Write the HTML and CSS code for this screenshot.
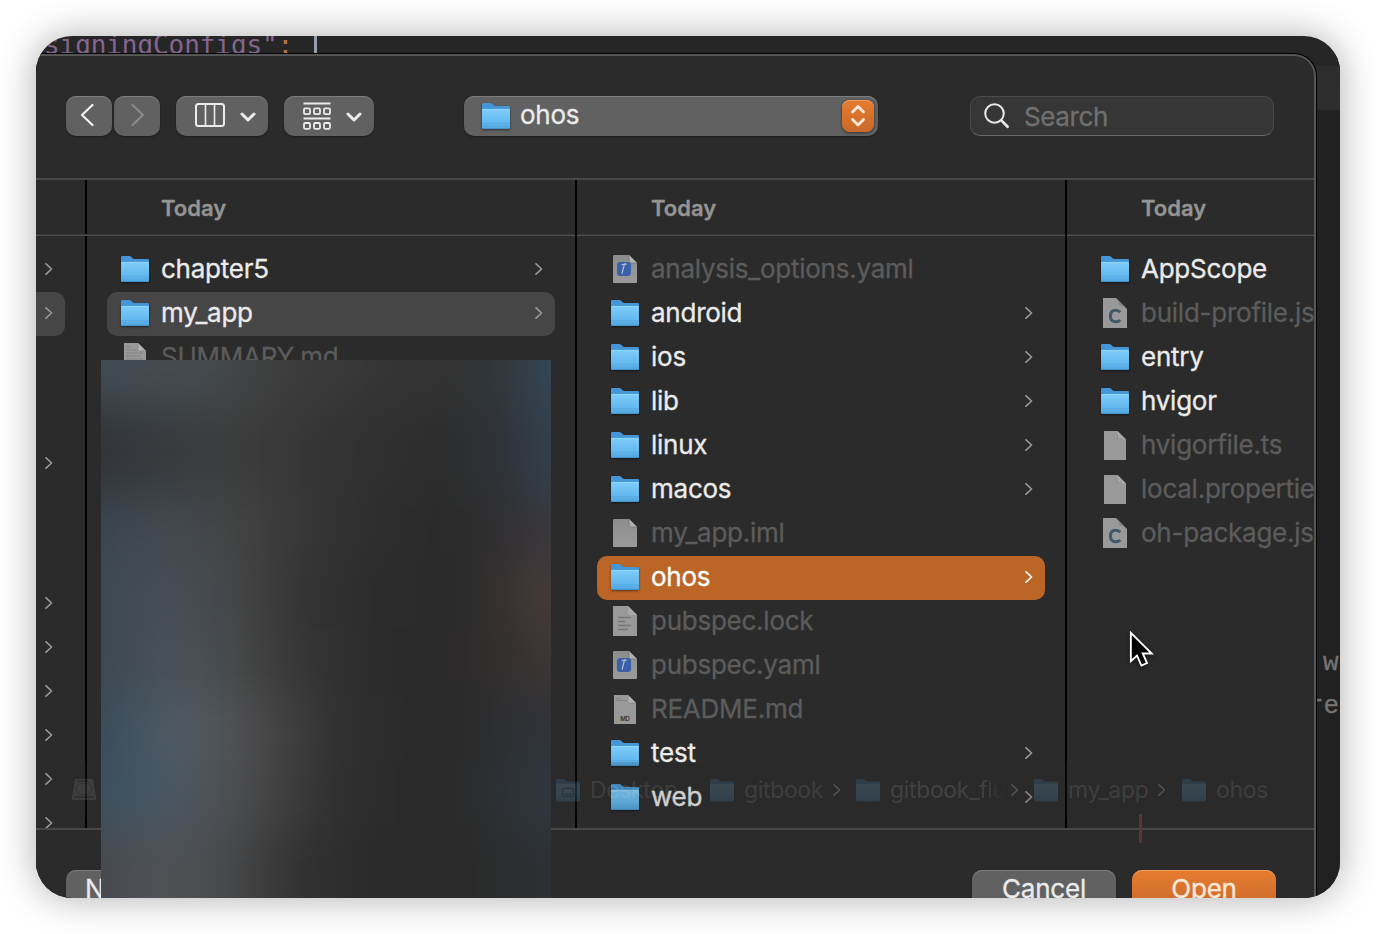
FILE: index.html
```html
<!DOCTYPE html>
<html lang="en">

<head>
    <meta charset="UTF-8">
    <meta name="viewport" content="width=device-width, initial-scale=1.0">
    <title>Open</title>
    <link rel="stylesheet" href="styles.css">
</head>

<body>
    <!-- icons -->
    <svg class="sprite" width="0" height="0">
        <defs>
            <linearGradient id="folderFront" x1="0" y1="0" x2="0" y2="1">
                <stop offset="0" stop-color="#7fcdfa" />
                <stop offset="0.75" stop-color="#60b6ee" />
                <stop offset="1" stop-color="#4ea3dc" />
            </linearGradient>
            <linearGradient id="paper" x1="0" y1="0" x2="0" y2="1">
                <stop offset="0" stop-color="#8d8d8d" />
                <stop offset="1" stop-color="#9b9b9b" />
            </linearGradient>
        </defs>
        <symbol id="folder" viewBox="0 0 28 27">
            <path d="M0 1.2Q0 0 1.2 0H8.4Q9.4 0 10.2 .8L11.6 2.2Q12.4 3 13.4 3H26.8Q28 3 28 4.2V24H0Z" fill="#4496d6" />
            <path d="M0 7Q0 6 1 6H27Q28 6 28 7V24.8Q28 26 26.8 26H1.2Q0 26 0 24.8Z" fill="url(#folderFront)" />
            <path d="M.5 6.4H27.5" stroke="#93d8fc" stroke-width=".8" />
            <path d="M0 20.5H28M0 22.5H28" stroke="#55a9e0" stroke-width=".8" />
            <path d="M.8 25.6H27.2" stroke="#3d8cc6" stroke-width=".8" />
        </symbol>
        <symbol id="file" viewBox="0 0 28 30">
            <path d="M2 2.2Q2 1 3.2 1H18L26 9V27.8Q26 29 24.8 29H3.2Q2 29 2 27.8Z" fill="url(#paper)" />
            <path d="M18 1L26 9H19Q18 9 18 8Z" fill="#b0b0b0" />
            <path d="M18 1V8Q18 9 19 9H26" fill="none" stroke="#777" stroke-width=".8" />
        </symbol>
        <symbol id="plain" viewBox="0 0 28 30">
            <path d="M3 1H16.5L25 9.5V30H3Z" fill="#999" />
            <path d="M16.5 1L25 9.5H18Q16.5 9.5 16.5 8Z" fill="#a8a8a8" />
            <path d="M16.5 5V9H21" fill="none" stroke="#858585" stroke-width=".8" />
        </symbol>
        <symbol id="yaml" viewBox="0 0 28 30">
            <use href="#file" />
            <rect x="6" y="8" width="14" height="14" rx="3" fill="#3961a8" />
            <path d="M10.6 11L14.6 9.8L15.4 11M13.4 10.4L11 19.6" fill="none" stroke="#b7c1d3" stroke-width="1.2" />
        </symbol>
        <symbol id="text" viewBox="0 0 28 30">
            <path d="M2 0H17L26 9V30H2Z" fill="#999" />
            <path d="M17 0L26 9H19Q17 9 17 7Z" fill="#aaa" />
            <path d="M7 11.5H20M7 15.5H14M7 19.5H20M7 23.5H17" stroke="#787878" stroke-width="1.5" />
        </symbol>
        <symbol id="md" viewBox="0 0 28 30">
            <path d="M3 1H17L25 9V30H3Z" fill="#999" />
            <path d="M17 1L25 9H18Q17 9 17 8Z" fill="#b4b4b4" stroke="#808080" stroke-width=".6" />
            <path d="M5 4.5H10M5 6.5H16" stroke="#858585" stroke-width="1" />
            <text class="md-label" x="14" y="26.8" text-anchor="middle">MD</text>
        </symbol>
        <symbol id="summary" viewBox="0 0 28 30">
            <path d="M3 1H17L25 9V30H3Z" fill="#999" />
            <path d="M17 1L25 9H18Q17 9 17 8Z" fill="#b4b4b4" stroke="#808080" stroke-width=".6" />
            <path d="M5 5H10M5 8H16M5 11H22M5 14H20M5 17H22" stroke="#838383" stroke-width="1" />
        </symbol>
        <symbol id="json" viewBox="0 0 28 30">
            <path d="M2 0H15L26 11V30H2Z" fill="#999" />
            <path d="M15 0L26 11Q23 7.5 18.5 7.5Q18 3 15 0Z" fill="#868686" />
            <path d="M19.2 14.2Q17.6 12.2 14.8 12.2Q9.4 12.2 9.4 18Q9.4 23.8 14.8 23.8Q17.6 23.8 19.2 22" fill="none" stroke="#40596a" stroke-width="3" />
        </symbol>
        <symbol id="go" viewBox="0 0 8 12">
            <path d="M1 .8L6.6 6L1 11.2" fill="none" stroke="currentColor" stroke-width="1.6" stroke-linecap="round" stroke-linejoin="round" />
        </symbol>
        <symbol id="down" viewBox="0 0 16 10">
            <path d="M2 2L8 8L14 2" fill="none" stroke="currentColor" stroke-width="3" stroke-linecap="round" stroke-linejoin="round" />
        </symbol>
    </svg>

    <div class="screen">
        <div class="code-line"><span class="key">signingConfigs"</span><span class="colon">:</span><span class="bracket"></span></div>

        <div class="workspace">
            <div class="dialog">
                <div class="toolbar">
                    <button class="btn nav-btn">
                        <svg width="14" height="24" viewBox="0 0 14 24"><path d="M12.5 2L2 12L12.5 22" fill="none" stroke="#f0f0f0" stroke-width="2.2" stroke-linecap="round" stroke-linejoin="round" /></svg>
                    </button>
                    <button class="btn nav-btn forward">
                        <svg width="14" height="24" viewBox="0 0 14 24"><path d="M1.5 2L12 12L1.5 22" fill="none" stroke="#8a8a8a" stroke-width="2.2" stroke-linecap="round" stroke-linejoin="round" /></svg>
                    </button>
                    <button class="btn view-btn">
                        <svg width="30" height="24" viewBox="0 0 30 24" fill="none" stroke="#ececec"><rect x="1" y="1" width="28" height="22" rx="2.5" stroke-width="2" /><path d="M10.5 1V23M19.5 1V23" stroke-width="1.6" /></svg>
                        <svg class="caret" width="16" height="10"><use href="#down" /></svg>
                    </button>
                    <button class="btn group-btn">
                        <svg width="28" height="28" viewBox="0 0 28 28" fill="none" stroke="#ececec" stroke-width="1.8">
                            <path d="M.5 1.5H27.5M.5 16.5H27.5" />
                            <rect x="1" y="6.4" width="6" height="5.8" rx="1.2" /><rect x="11" y="6.4" width="6" height="5.8" rx="1.2" /><rect x="21" y="6.4" width="6" height="5.8" rx="1.2" />
                            <rect x="1" y="21" width="6" height="5.8" rx="1.2" /><rect x="11" y="21" width="6" height="5.8" rx="1.2" /><rect x="21" y="21" width="6" height="5.8" rx="1.2" />
                        </svg>
                        <svg class="caret" width="16" height="10"><use href="#down" /></svg>
                    </button>
                    <div class="btn path-select">
                        <svg class="folder" width="28" height="27"><use href="#folder" /></svg>
                        <span>ohos</span>
                        <div class="stepper">
                            <svg width="16" height="24" viewBox="0 0 16 24"><path d="M2.5 8L8 2.5L13.5 8M2.5 15.5L8 21L13.5 15.5" fill="none" stroke="#fbe9dc" stroke-width="2.8" stroke-linecap="round" stroke-linejoin="round" /></svg>
                        </div>
                    </div>
                    <div class="search">
                        <svg width="26" height="26" viewBox="0 0 26 26" fill="none" stroke="#e8e8e8" stroke-linecap="round"><circle cx="10.5" cy="10.5" r="9.3" stroke-width="2" /><path d="M17.6 17.6L23.6 23.8" stroke-width="2.8" /></svg>
                        <span>Search</span>
                    </div>
                </div>

                <div class="browser">
                    <div class="column first">
                        <div class="column-head"></div>
                        <div class="rows">
                            <div class="row"><svg class="go"><use href="#go" /></svg></div>
                            <div class="row current"><svg class="go"><use href="#go" /></svg></div>
                            <div class="row group-a"><svg class="go"><use href="#go" /></svg></div>
                            <div class="row group-b"><svg class="go"><use href="#go" /></svg></div>
                            <div class="row"><svg class="go"><use href="#go" /></svg></div>
                            <div class="row"><svg class="go"><use href="#go" /></svg></div>
                            <div class="row"><svg class="go"><use href="#go" /></svg></div>
                            <div class="row"><svg class="go"><use href="#go" /></svg></div>
                            <div class="row"><svg class="go"><use href="#go" /></svg></div>
                        </div>
                    </div>

                    <div class="column">
                        <div class="column-head">Today</div>
                        <div class="rows">
                            <div class="row"><svg class="folder"><use href="#folder" /></svg><span>chapter5</span><svg class="go"><use href="#go" /></svg></div>
                            <div class="row current"><svg class="folder"><use href="#folder" /></svg><span>my_app</span><svg class="go"><use href="#go" /></svg></div>
                            <div class="row disabled"><svg class="file"><use href="#summary" /></svg><span>SUMMARY.md</span></div>
                        </div>
                    </div>

                    <div class="column">
                        <div class="column-head">Today</div>
                        <div class="rows">
                            <div class="row disabled"><svg class="file"><use href="#yaml" /></svg><span>analysis_options.yaml</span></div>
                            <div class="row"><svg class="folder"><use href="#folder" /></svg><span>android</span><svg class="go"><use href="#go" /></svg></div>
                            <div class="row"><svg class="folder"><use href="#folder" /></svg><span>ios</span><svg class="go"><use href="#go" /></svg></div>
                            <div class="row"><svg class="folder"><use href="#folder" /></svg><span>lib</span><svg class="go"><use href="#go" /></svg></div>
                            <div class="row"><svg class="folder"><use href="#folder" /></svg><span>linux</span><svg class="go"><use href="#go" /></svg></div>
                            <div class="row"><svg class="folder"><use href="#folder" /></svg><span>macos</span><svg class="go"><use href="#go" /></svg></div>
                            <div class="row disabled"><svg class="file"><use href="#file" /></svg><span>my_app.iml</span></div>
                            <div class="row selected"><svg class="folder"><use href="#folder" /></svg><span>ohos</span><svg class="go"><use href="#go" /></svg></div>
                            <div class="row disabled"><svg class="file"><use href="#text" /></svg><span>pubspec.lock</span></div>
                            <div class="row disabled"><svg class="file"><use href="#yaml" /></svg><span>pubspec.yaml</span></div>
                            <div class="row disabled"><svg class="file"><use href="#md" /></svg><span>README.md</span></div>
                            <div class="row"><svg class="folder"><use href="#folder" /></svg><span>test</span><svg class="go"><use href="#go" /></svg></div>
                            <div class="row"><svg class="folder"><use href="#folder" /></svg><span>web</span><svg class="go"><use href="#go" /></svg></div>
                        </div>
                    </div>

                    <div class="column last">
                        <div class="column-head">Today</div>
                        <div class="rows">
                            <div class="row"><svg class="folder"><use href="#folder" /></svg><span>AppScope</span></div>
                            <div class="row disabled"><svg class="file"><use href="#json" /></svg><span>build-profile.json5</span></div>
                            <div class="row"><svg class="folder"><use href="#folder" /></svg><span>entry</span></div>
                            <div class="row"><svg class="folder"><use href="#folder" /></svg><span>hvigor</span></div>
                            <div class="row disabled"><svg class="file"><use href="#plain" /></svg><span>hvigorfile.ts</span></div>
                            <div class="row disabled"><svg class="file"><use href="#plain" /></svg><span>local.properties</span></div>
                            <div class="row disabled"><svg class="file"><use href="#json" /></svg><span>oh-package.json5</span></div>
                        </div>
                    </div>
                </div>

                <div class="footer">
                    <button class="btn new-btn">New Folder</button>
                    <button class="btn cancel-btn">Cancel</button>
                    <button class="btn open-btn">Open</button>
                </div>

                <!-- path bar fading out over the columns -->
                <div class="path-bar">
                    <svg class="disk" width="24" height="24" viewBox="0 0 24 24"><path d="M3 1H21L24 19V22H0V19Z" fill="#999" /><path d="M5 3H16M2 19H22M3 23H6M9 23H12M18 23H21" stroke="#444" stroke-width="1.5" /><ellipse cx="12" cy="11" rx="8" ry="6" fill="none" stroke="#555" /></svg>
                    <div class="crumb desktop"><svg width="24" height="23"><use href="#folder" /><rect x="6.5" y="9.5" width="11" height="8" rx="1.5" fill="none" stroke="#357" /><path d="M8.5 15.5H15.5" stroke="#357" /></svg><span>Desktop</span></div>
                    <div class="crumb gitbook"><svg width="24" height="23"><use href="#folder" /></svg><span>gitbook</span><svg class="go"><use href="#go" /></svg></div>
                    <div class="crumb flutter"><svg width="24" height="23"><use href="#folder" /></svg><span>gitbook_flutter</span><svg class="go"><use href="#go" /></svg></div>
                    <div class="crumb app"><svg width="24" height="23"><use href="#folder" /></svg><span>my_app</span><svg class="go"><use href="#go" /></svg></div>
                    <div class="crumb"><svg width="24" height="23"><use href="#folder" /></svg><span>ohos</span></div>
                </div>
                <div class="text-caret"></div>
                <!-- blurred out area -->
                <div class="mosaic">
                    <div class="smear">
                        <div class="band band-1"></div>
                        <div class="band band-2"></div>
                        <div class="band band-3"></div>
                        <div class="band band-4"></div>
                        <div class="band band-5"></div>
                        <div class="band band-6"></div>
                        <div class="band band-7"></div>
                        <div class="band band-8"></div>
                    </div>
                </div>
                <svg class="pointer" width="26" height="39" viewBox="0 0 28 42"><path d="M2 2V32.5L8.6 26.5L13.4 37.2L19.4 34.6L14.8 24.2H24.5Z" fill="#000" stroke="#fff" stroke-width="2" /></svg>
            </div>

            <div class="gutter">
                <div class="tab-strip"></div>
                <div class="gutter-text word">w</div>
                <div class="gutter-text rel">rel</div>
            </div>
        </div>
    </div>
</body>

</html>
```
FILE: styles.css
```css
* {
    box-sizing: border-box;
}

body {
    margin: 0;
    padding: 36px;
    height: 934px;
    overflow: hidden;
    background: #fff;
    font-family: Inter, "Liberation Sans", sans-serif;
}

.sprite {
    position: absolute;
}

.screen {
    width: 1304px;
    height: 862px;
    overflow: hidden;
    border-radius: 36px;
    background: #262626;
    box-shadow: 0 0 38px rgba(0, 0, 0, 0.32);
}

/* editor behind the dialog */
.code-line {
    display: flex;
    height: 18px;
    padding-left: 8px;
    font: 26px/18px "DejaVu Sans Mono", monospace;
    letter-spacing: -0.08px;
}

.key {
    color: #84658f;
}

.colon {
    color: #b8733a;
}

.bracket {
    width: 3px;
    height: 17px;
    margin-left: 21px;
    background: #94a0ae;
}

.workspace {
    display: flex;
    height: 844px;
}

.gutter {
    width: 24px;
    overflow: hidden;
    background: #212121;
    border-top: 12px solid #262626;
}

.tab-strip {
    height: 44px;
    background: #2d2d2d;
}

.gutter-text {
    height: 43px;
    color: #747474;
    font: 26px/43px "Liberation Mono", monospace;
    -webkit-text-stroke: 0.3px;
}

.word {
    margin-top: 532px;
    padding-left: 7px;
}

.rel {
    margin-left: -8px;
}

/* dialog */
.dialog {
    position: relative;
    display: flex;
    flex-direction: column;
    flex: none;
    width: 1280px;
    height: 844px;
    overflow: hidden;
    background: #2b2b2b;
    border-top-right-radius: 22px;
    box-shadow: 0 0 0 1px #000;
}

.dialog::after {
    content: "";
    position: absolute;
    inset: 0;
    border: solid #565656;
    border-width: 2px 2px 0 0;
    border-top-right-radius: 22px;
    pointer-events: none;
}

.toolbar {
    display: flex;
    flex: none;
    align-items: flex-start;
    height: 126px;
    padding: 42px 0 0 30px;
    border-bottom: 2px solid #484848;
}

.btn {
    display: flex;
    align-items: center;
    flex: none;
    height: 40px;
    padding: 0;
    border: 0;
    border-radius: 10px;
    background: #616161;
    color: #ebebeb;
    font-family: inherit;
    font-size: 26px;
    -webkit-text-stroke: 0.3px;
    box-shadow: inset 0 1px 0 #7d7d7d, 0 1px 2px rgba(0, 0, 0, 0.4);
}

.nav-btn {
    width: 46px;
    padding: 0 0 2px 14px;
}

.forward {
    margin-left: 2px;
    padding-left: 17px;
}

.view-btn {
    width: 92px;
    margin-left: 16px;
    padding: 0 12px 2px 19px;
    justify-content: space-between;
}

.group-btn {
    width: 90px;
    margin-left: 16px;
    padding: 0 12px 1px 19px;
    justify-content: space-between;
}

.caret {
    margin-top: 3px;
}

.path-select {
    width: 414px;
    margin-left: 90px;
    padding: 0 4px 0 18px;
    letter-spacing: -0.25px;
}

.path-select span {
    flex: 1;
    margin: -3px 0 0 10px;
}

.stepper {
    display: flex;
    align-items: center;
    justify-content: center;
    width: 32px;
    height: 32px;
    border-radius: 8px;
    background: linear-gradient(#e57c30, #ca692a);
    box-shadow: inset 0 1px 0 #ef9c5b, 0 1px 3px rgba(0, 0, 0, 0.5);
}

.search {
    display: flex;
    align-items: center;
    width: 304px;
    height: 40px;
    margin-left: 92px;
    padding-left: 13px;
    border: 1px solid #4a4a4a;
    border-bottom-color: #686868;
    border-radius: 10px;
    background: #363636;
    color: #707070;
    font-size: 26px;
}

.search span {
    margin: 0 0 0 14px;
    letter-spacing: -0.4px;
    -webkit-text-stroke: 0.3px;
}

.browser {
    display: flex;
    flex: none;
    height: 648px;
    overflow: hidden;
}

.column {
    flex: none;
    width: 490px;
    border-right: 2px solid #000;
}

.column.first {
    width: 51px;
}

.column.last {
    width: 249px;
    border-right: 0;
    overflow: hidden;
}

.column-head {
    height: 56px;
    padding-left: 74px;
    border-bottom: 1px solid #505050;
    box-shadow: inset 0 -1px 0 #383838;
    color: #949494;
    font-size: 22px;
    font-weight: 600;
    line-height: 57px;
    -webkit-text-stroke: 0.3px;
}

.rows {
    padding: 12px 20px 0;
}

.row {
    display: flex;
    align-items: center;
    height: 44px;
    padding: 0 12px 0 14px;
    border-radius: 10px;
    color: #ebebeb;
    font-size: 26px;
    white-space: nowrap;
    letter-spacing: -0.25px;
    -webkit-text-stroke: 0.3px;
}

.row span {
    margin: -4px 0 0 12px;
}

.row .go {
    margin-left: auto;
}

.row.disabled {
    color: #5c5c5c;
}

.row.current {
    background: #464646;
}

.row.selected {
    background: #bb6626;
    color: #fff;
}

.row.selected .go {
    color: #fff;
}

.first .rows {
    padding: 12px 20px 0 0;
}

.first .row {
    padding: 0 13px 0 8px;
    border-radius: 0 10px 10px 0;
}

.first .row .go {
    margin-left: 1px;
}

.group-a {
    margin-top: 106px;
}

.group-b {
    margin-top: 96px;
}

.folder {
    flex: none;
    width: 28px;
    height: 27px;
    filter: drop-shadow(0 1px 1px rgba(0, 0, 0, 0.5));
}

.row .folder {
    margin-bottom: 1px;
}

.file {
    flex: none;
    width: 28px;
    height: 30px;
    margin-bottom: 2px;
}

.go {
    flex: none;
    width: 8px;
    height: 12px;
    margin-bottom: 2px;
    color: #9a9a9a;
}

.md-label {
    font: 600 6px Inter, sans-serif;
    fill: #333;
    -webkit-text-stroke: 0;
}

.footer {
    display: flex;
    flex: none;
    height: 70px;
    padding: 40px 40px 0 30px;
    border-top: 2px solid #484848;
}

.footer .btn {
    justify-content: center;
    width: 144px;
    letter-spacing: -0.2px;
    padding-bottom: 3px;
}

.footer .new-btn {
    width: 176px;
}

.footer .cancel-btn {
    margin-left: auto;
}

.footer .open-btn {
    margin-left: 16px;
    background: linear-gradient(#e57c30, #ca692a);
    color: #fbe9dc;
    box-shadow: inset 0 1px 0 #ef9c5b;
}

/* overlays */
.path-bar {
    position: absolute;
    left: 14px;
    top: 708px;
    display: flex;
    align-items: center;
    width: 1266px;
    height: 56px;
    padding-left: 22px;
    border-radius: 12px;
    background: rgba(44, 44, 44, 0.14);
    color: rgba(255, 255, 255, 0.11);
    font-size: 23px;
}

.path-bar svg {
    flex: none;
    opacity: 0.18;
}

.path-bar .go {
    margin: 0;
    color: #fff;
}

.crumb {
    display: flex;
    align-items: center;
    flex: none;
    width: 178px;
    letter-spacing: -0.35px;
}

.crumb span {
    margin: 0 10px 0 10px;
}

.desktop {
    width: 154px;
    margin-left: 460px;
}

.gitbook {
    width: 146px;
}

.flutter span {
    width: 116px;
    margin-right: 5px;
    overflow: hidden;
    -webkit-mask-image: linear-gradient(90deg, #000 80%, transparent);
    mask-image: linear-gradient(90deg, #000 80%, transparent);
}

.app {
    width: 148px;
}

.text-caret {
    position: absolute;
    left: 1103px;
    top: 760px;
    width: 3px;
    height: 29px;
    background: #57392f;
}

.mosaic {
    position: absolute;
    left: 65px;
    top: 306px;
    width: 450px;
    height: 538px;
    overflow: hidden;
    background: #2b2b2b;
}

.smear {
    margin: -60px;
    filter: blur(22px);
}

.band {
    height: 67px;
}

.band-1 {
    height: 108px;
    background: linear-gradient(90deg, #404b53 60px, #464b4e 160px, #3e3e3e 230px, #353535 340px, #313131 420px, #333b41 480px, #33485a 510px);
}

.band-2 {
    height: 86px;
    background: linear-gradient(90deg, #313439 60px, #393c3e 130px, #3c3c3c 210px, #333 290px, #2c2c2c 400px, #2f3338 470px, #334352 510px);
}

.band-3 {
    background: linear-gradient(90deg, #39454e 60px, #424a51 120px, #444 190px, #373737 260px, #2e2c2c 340px, #2b2b2b 430px, #3a383e 510px);
}

.band-4 {
    background: linear-gradient(90deg, #3c4952 60px, #474f57 130px, #454545 200px, #363636 250px, #2d2c2c 320px, #2b2b2b 430px, #483c3a 510px);
}

.band-5 {
    background: linear-gradient(90deg, #3b4852 60px, #4a535a 135px, #474747 200px, #353535 260px, #2b2b2b 340px, #2d2b2b 440px, #3e3736 510px);
}

.band-6 {
    background: linear-gradient(90deg, #394b5a 60px, #4d5c67 130px, #545558 175px, #474747 228px, #303030 295px, #2b2b2b 360px, #2b2b2b 430px, #30343a 510px);
}

.band-7 {
    background: linear-gradient(90deg, #3b4f5e 60px, #485966 125px, #505256 170px, #474747 220px, #303030 290px, #2b2b2b 350px, #2b2b2b 430px, #303942 510px);
}

.band-8 {
    height: 130px;
    background: linear-gradient(90deg, #45494e 60px, #505357 120px, #48494a 190px, #333 250px, #2b2b2b 320px, #2b2b2b 440px, #2d3135 510px);
}

.pointer {
    position: absolute;
    left: 1093px;
    top: 577px;
    filter: drop-shadow(0 2px 2px rgba(0, 0, 0, 0.5));
}
```
